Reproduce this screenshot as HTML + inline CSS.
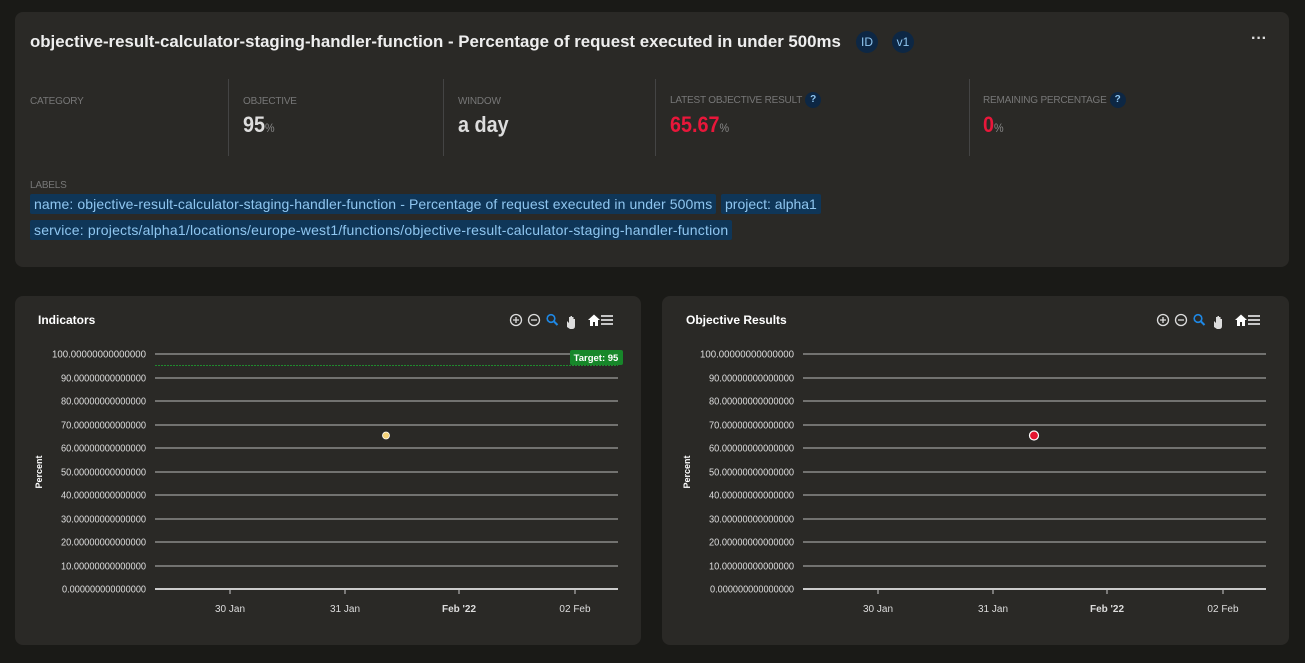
<!DOCTYPE html>
<html><head><meta charset="utf-8"><style>
*{margin:0;padding:0;box-sizing:border-box}
body{width:1305px;height:663px;background:#1a1a17;font-family:"Liberation Sans",sans-serif;position:relative;overflow:hidden;color:#e8e8e8}
.card{position:absolute;background:#2a2926;border-radius:8px}
.t{position:absolute;white-space:nowrap;transform-origin:left top}
.lbl{font-size:10px;color:#777;letter-spacing:-0.2px}
.big{font-size:22px;font-weight:bold;color:#ddd;transform:scaleX(.9)}
.big small{font-size:12px;color:#888;font-weight:normal}
.div{position:absolute;width:1px;background:#444;top:79px;height:77px}
.chip{position:absolute;background:#0f3658;color:#8fc6f0;font-size:14px;height:20px;line-height:20px;padding:0 4px;border-radius:2px;white-space:nowrap}
.badge{position:absolute;width:22px;height:22px;border-radius:11px;background:#0d2744;color:#8fc6f0;font-size:12px;text-align:center;line-height:22px}
.q{display:inline-block;width:16px;height:16px;border-radius:8px;background:#0d2744;color:#8fc6f0;font-size:10px;text-align:center;line-height:16px;font-weight:bold;vertical-align:middle;margin-left:3px}
</style></head><body>
<div class="card" style="left:15px;top:12px;width:1274px;height:255px"></div>
<div class="t" style="left:30px;top:32px;font-size:17px;font-weight:bold;color:#eee;transform:scaleX(.99)">objective-result-calculator-staging-handler-function - Percentage of request executed in under 500ms</div>
<div class="badge" style="left:856px;top:31px">ID</div>
<div class="badge" style="left:892px;top:31px">v1</div>
<div class="t" style="left:1251px;top:30px;font-size:16px;font-weight:bold;color:#ddd">···</div>
<div class="div" style="left:228px"></div><div class="div" style="left:443px"></div><div class="div" style="left:655px"></div><div class="div" style="left:969px"></div>
<div class="t lbl" style="left:30px;top:96px">CATEGORY</div>
<div class="t lbl" style="left:243px;top:96px">OBJECTIVE</div>
<div class="t big" style="left:243px;top:112px">95<small>%</small></div>
<div class="t lbl" style="left:458px;top:96px">WINDOW</div>
<div class="t big" style="left:458px;top:112px">a day</div>
<div class="t lbl" style="left:670px;top:92px;line-height:18px">LATEST OBJECTIVE RESULT<span class="q">?</span></div>
<div class="t big" style="left:670px;top:112px;color:#e8173a">65.67<small>%</small></div>
<div class="t lbl" style="left:983px;top:92px;line-height:18px">REMAINING PERCENTAGE<span class="q">?</span></div>
<div class="t big" style="left:983px;top:112px;color:#e8173a">0<small>%</small></div>
<div class="t lbl" style="left:30px;top:180px">LABELS</div>
<div class="chip" style="left:30px;top:194px;letter-spacing:0.1px">name: objective-result-calculator-staging-handler-function - Percentage of request executed in under 500ms</div>
<div class="chip" style="left:721px;top:194px">project: alpha1</div>
<div class="chip" style="left:30px;top:220px;letter-spacing:0.2px">service: projects/alpha1/locations/europe-west1/functions/objective-result-calculator-staging-handler-function</div>

<div class="card" style="left:15px;top:296px;width:626px;height:349px"></div>
<div class="card" style="left:662px;top:296px;width:627px;height:349px"></div>
<div class="t" style="left:38px;top:313px;font-size:12px;font-weight:bold;color:#fff">Indicators</div>
<div class="t" style="left:686px;top:313px;font-size:12px;font-weight:bold;color:#fff">Objective Results</div>

<svg width="1305" height="663" style="position:absolute;left:0;top:0" font-family="Liberation Sans, sans-serif">
<defs>
<g id="tools" fill="none" stroke="#ddd" stroke-width="1.3">
<circle cx="5" cy="5" r="5.5"/><path d="M2 5h6M5 2v6"/>
<circle cx="23" cy="5" r="5.5"/><path d="M20 5h6"/>
<circle cx="40" cy="3.5" r="3.8" stroke="#1e88e5" stroke-width="1.6"/><path d="M43 6.5l3.5 3.5" stroke="#1e88e5" stroke-width="2"/>
<path d="M56 12v-6l2 2v-6h1.5v5v-6h1.5v6v-5h1.5v6v-4h1.5v7q0 3-3 3h-2z" fill="#ddd" stroke="none"/>
<path d="M77 5l6-5.5 6 5.5h-2v6h-3v-4h-2v4h-3v-6z" fill="#fff" stroke="none"/>
<path d="M90 1h12M90 5h12M90 9h12" stroke-width="1.8"/>
</g>
<g id="axes">
<g stroke="#bbb" stroke-width="1" shape-rendering="crispEdges">
<path d="M0 0h463M0 24h463M0 47h463M0 71h463M0 94h463M0 118h463M0 141h463M0 165h463M0 188h463M0 212h463"/>
</g>
<path d="M0 235h463" stroke="#ccc" stroke-width="2"/>
<path d="M75 235v5M190 235v5M304 235v5M420 235v5" stroke="#ccc"/>
<g fill="#ddd" font-size="10" text-anchor="end" lengthAdjust="spacingAndGlyphs">
<text x="-9" y="3.5" textLength="94" lengthAdjust="spacingAndGlyphs">100.00000000000000</text><text x="-9" y="27.5" textLength="85" lengthAdjust="spacingAndGlyphs">90.00000000000000</text><text x="-9" y="50.5" textLength="85" lengthAdjust="spacingAndGlyphs">80.00000000000000</text><text x="-9" y="74.5" textLength="85" lengthAdjust="spacingAndGlyphs">70.00000000000000</text><text x="-9" y="97.5" textLength="85" lengthAdjust="spacingAndGlyphs">60.00000000000000</text><text x="-9" y="121.5" textLength="85" lengthAdjust="spacingAndGlyphs">50.00000000000000</text><text x="-9" y="144.5" textLength="85" lengthAdjust="spacingAndGlyphs">40.00000000000000</text><text x="-9" y="168.5" textLength="85" lengthAdjust="spacingAndGlyphs">30.00000000000000</text><text x="-9" y="191.5" textLength="85" lengthAdjust="spacingAndGlyphs">20.00000000000000</text><text x="-9" y="215.5" textLength="85" lengthAdjust="spacingAndGlyphs">10.00000000000000</text><text x="-9" y="238.5" textLength="84" lengthAdjust="spacingAndGlyphs">0.000000000000000</text>
</g>
<g fill="#ddd" font-size="10" text-anchor="middle">
<text x="75" y="258">30 Jan</text><text x="190" y="258">31 Jan</text><text x="304" y="258" font-weight="bold">Feb '22</text><text x="420" y="258">02 Feb</text>
</g>
<text transform="translate(-113 118) rotate(-90)" fill="#fff" font-size="9" font-weight="bold" text-anchor="middle">Percent</text>
</g>
</defs>
<use href="#tools" x="511" y="315"/>
<use href="#tools" x="1158" y="315"/>
<use href="#axes" x="155" y="354"/>
<use href="#axes" x="803" y="354"/>
<path d="M155 365.5h463" stroke="#1f8a2e" stroke-dasharray="2 1"/>
<rect x="570" y="350" width="53" height="15" rx="2" fill="#17872a"/>
<text x="596" y="361" fill="#fff" font-size="9.5" font-weight="bold" text-anchor="middle">Target: 95</text>
<circle cx="386" cy="435.5" r="3.5" fill="#f5d37a" stroke="#fff" stroke-width=".8"/>
<circle cx="1034" cy="435.5" r="4.5" fill="#e5152f" stroke="#fff" stroke-width="1.2"/>
</svg>
</body></html>
